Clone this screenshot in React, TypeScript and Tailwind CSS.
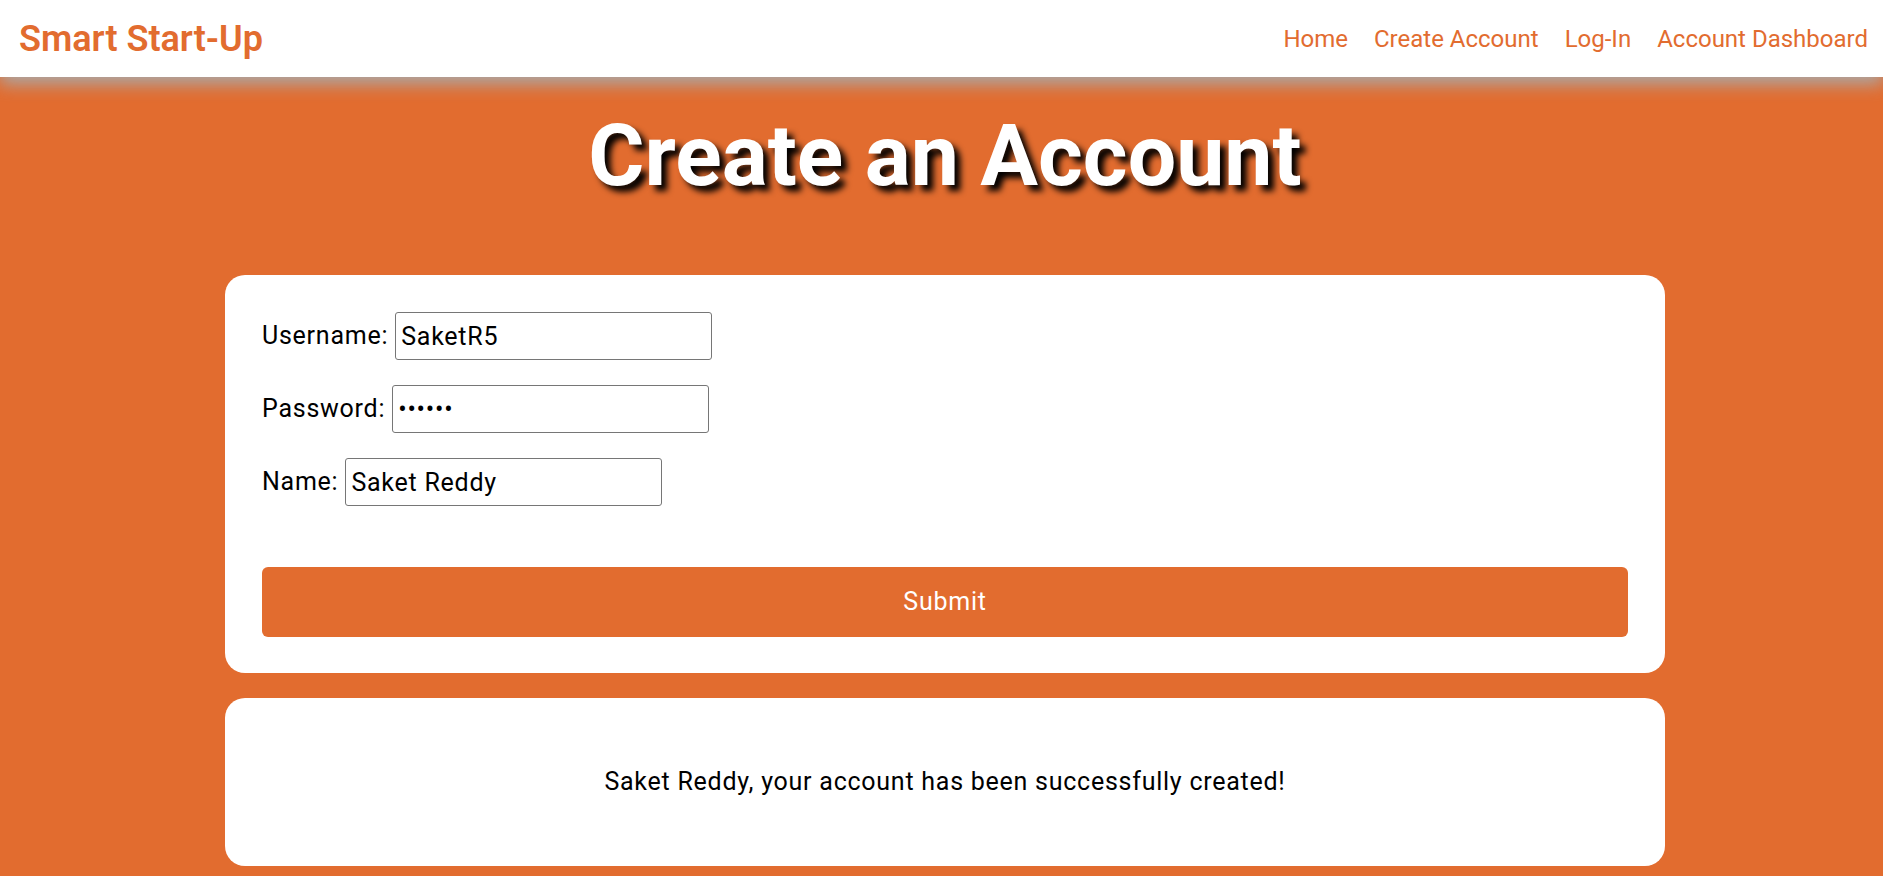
import React from "react";

export default function App() {
  const inputCls =
    "h-[48px] w-[317px] rounded-[3px] border border-[#767676] px-[5px] text-[25px] tracking-[0.75px] text-black outline-none";
  return (
    <div className="min-h-screen bg-[#e26c2f] font-['Roboto','Liberation_Sans',sans-serif] text-black">
      <nav className="relative z-10 flex h-[77px] items-center justify-between bg-white pl-[19px] pr-[15px] shadow-[0_7px_16px_#a9a9a9]">
        <div className="text-[36px] font-semibold text-[#e26c2f]">Smart Start-Up</div>
        <div className="flex items-center gap-[26px] text-[24px] text-[#e26c2f]">
          <a href="#">Home</a>
          <a href="#">Create Account</a>
          <a href="#">Log-In</a>
          <a href="#">Account Dashboard</a>
        </div>
      </nav>

      <main className="flex flex-col items-center pl-[7px]">
        <h1 className="mt-[36px] text-center text-[86px] font-bold leading-none text-white [text-shadow:6px_6px_6px_#000]">
          Create an Account
        </h1>

        <div className="mt-[76px] w-[1440px] rounded-[20px] bg-white px-[37px] pb-[36px] pt-[37px]">
          <div className="flex flex-col gap-[25px] text-[25px] tracking-[0.75px]">
            <div className="flex items-center gap-[7px]">
              <label>Username:</label>
              <input type="text" defaultValue="SaketR5" className={inputCls} />
            </div>
            <div className="flex items-center gap-[7px]">
              <label>Password:</label>
              <input type="password" defaultValue="secret" className={inputCls} />
            </div>
            <div className="flex items-center gap-[7px]">
              <label>Name:</label>
              <input type="text" defaultValue="Saket Reddy" className={inputCls} />
            </div>
          </div>
          <button className="mt-[61px] h-[70px] w-full rounded-[6px] bg-[#e26c2f] text-[25px] tracking-[0.75px] text-white">
            Submit
          </button>
        </div>

        <div className="mt-[25px] flex h-[168px] w-[1440px] items-center justify-center rounded-[20px] bg-white text-[25px] tracking-[0.75px]">
          Saket Reddy, your account has been successfully created!
        </div>
      </main>
    </div>
  );
}
